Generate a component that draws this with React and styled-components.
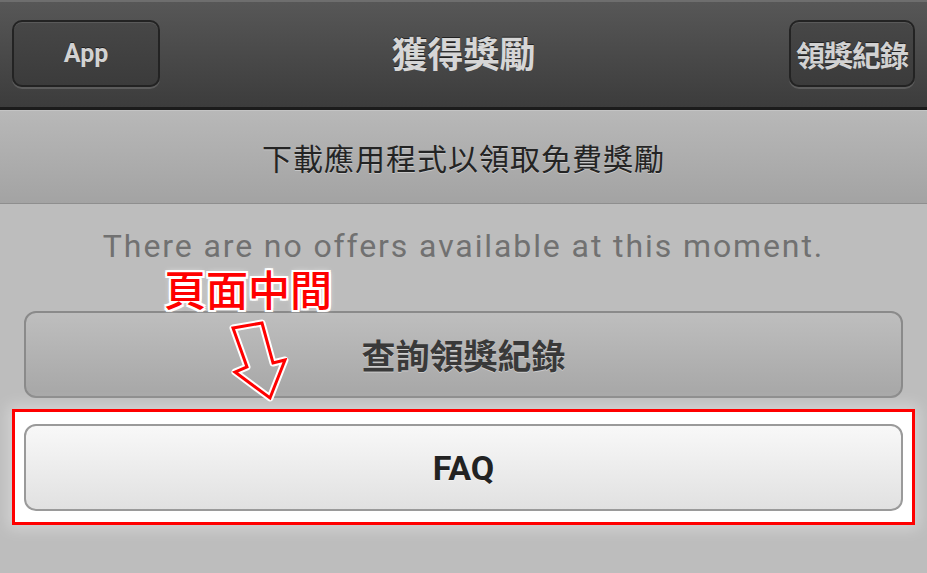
import styled, { createGlobalStyle } from "styled-components";

const GlobalStyle = createGlobalStyle`
html, body {
    margin: 0;
    padding: 0;
    background: #bdbdbd;
}
body {
    font-family: Roboto, "Noto Sans CJK TC", "Noto Sans", sans-serif;
}
`
const Page = styled.div`
position: relative;
width: 927px;
height: 573px;
overflow: hidden;
background: #bdbdbd;
`
const TopBar = styled.header`
display: grid;
grid-template-columns: 1fr auto 1fr;
align-items: center;
height: 105px;
padding: 0 12px 0 12px;
background: linear-gradient(#575757, #3c3c3c);
border-top: 2px solid #6e6e6e;
border-bottom: 3px solid #1b1b1b;
`
const BarButton = styled.button`
justify-self: ${( { side } ) => side === "right" ? "end" : "start"};
width: ${( { side } ) => side === "right" ? "126px" : "148px"};
height: 67px;
margin-top: -2px;
padding: 0;
border-radius: 10px;
border: 2px solid #232323;
background: linear-gradient(#474747, #3b3b3b);
box-shadow: inset 0 1px 0 #5a5a5a, 0 2px 0 #5c5c5c;
color: #d2d2d2;
font-family: Roboto, "Noto Sans CJK TC", sans-serif;
font-weight: 700;
font-size: ${( { side } ) => side === "right" ? "29px" : "25px"};
letter-spacing: ${( { side } ) => side === "right" ? "-1px" : "0"};
text-shadow: 0 -1px 0 #222;
white-space: nowrap;
`
const Title = styled.h1`
margin: 0;
margin-top: -6px;
font-size: 36px;
font-weight: 700;
color: #d6d6d6;
text-shadow: 0 -1px 0 #222;
font-family: "Noto Sans CJK TC", sans-serif;
`
const SubBar = styled.div`
display: flex;
align-items: center;
justify-content: center;
height: 92px;
background: linear-gradient(#b8b8b8, #a3a3a3);
border-top: 1px solid #c4c4c4;
border-bottom: 1px solid #8e8e8e;
font-family: "Noto Sans CJK TC", sans-serif;
font-size: 30px;
letter-spacing: 1px;
color: #242424;
text-shadow: 0 1px 0 rgba(255,255,255,0.35);
`
const Content = styled.main`
display: flex;
flex-direction: column;
padding: 24px 24px 0 24px;
`
const Message = styled.p`
margin: 0;
text-align: center;
line-height: 36px;
font-size: 32px;
letter-spacing: 1.9px;
color: #717171;
font-family: Roboto, sans-serif;
`
const ActionButton = styled.button`
width: 100%;
height: 87px;
margin: 0;
border-radius: 12px;
border: 2px solid ${( { light } ) => light ? "#9a9a9a" : "#8a8a8a"};
background: ${( { light } ) => light
        ? "linear-gradient(#f8f8f8, #e1e1e1)"
        : "linear-gradient(#bebebe, #a7a7a7)"};
color: ${( { light } ) => light ? "#222" : "#393939"};
font-family: Roboto, "Noto Sans CJK TC", sans-serif;
font-weight: 700;
font-size: 34px;
text-shadow: 0 1px 0 rgba(255,255,255,0.4);
`
const FirstAction = styled.div`
margin-top: 47px;
`
const Highlight = styled.div`
margin: 11px -12px 0 -12px;
padding: 12px 9px 11px 9px;
background: #fff;
border: 3px solid #f00;
box-shadow: 0 0 14px 4px rgba(255,255,255,0.35);
`
const Note = styled.div`
position: absolute;
left: 164px;
top: 266px;
height: 44px;
font-family: "Noto Sans CJK TC", sans-serif;
font-size: 42px;
font-weight: 500;
color: #f00;
line-height: 44px;
white-space: nowrap;
text-shadow:
    2px 0 0 #fff, -2px 0 0 #fff, 0 2px 0 #fff, 0 -2px 0 #fff,
    2px 2px 0 #fff, -2px -2px 0 #fff, 2px -2px 0 #fff, -2px 2px 0 #fff,
    0 0 6px rgba(255,255,255,0.8);
`
const Arrow = styled.svg`
position: absolute;
left: 222px;
top: 312px;
overflow: visible;
`

const arrowPoints = "11,16 40,11 51,51 63,48 48,86 13,60 25,55"

const App = () => {
    return (
        <>
            <GlobalStyle />
            <Page>
                <TopBar>
                    <BarButton side="left">App</BarButton>
                    <Title>獲得獎勵</Title>
                    <BarButton side="right">領獎紀錄</BarButton>
                </TopBar>
                <SubBar>下載應用程式以領取免費獎勵</SubBar>
                <Content>
                    <Message>There are no offers available at this moment.</Message>
                    <FirstAction>
                        <ActionButton>查詢領獎紀錄</ActionButton>
                    </FirstAction>
                    <Highlight>
                        <ActionButton light>FAQ</ActionButton>
                    </Highlight>
                </Content>
                <Note>頁面中間</Note>
                <Arrow width="74" height="96" viewBox="0 0 74 96">
                    <polygon points={arrowPoints} fill="none" stroke="#fff" strokeWidth="7" strokeLinejoin="round" />
                    <polygon points={arrowPoints} fill="none" stroke="#f00" strokeWidth="3" strokeLinejoin="miter" />
                </Arrow>
            </Page>
        </>
    )
}
export default App;
